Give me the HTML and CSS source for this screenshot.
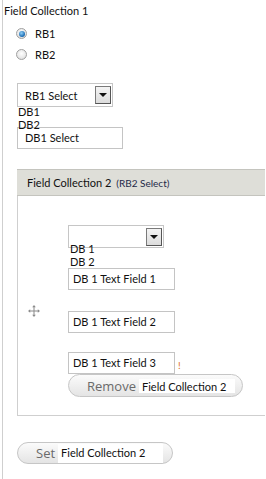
FILE: index.html
```html
<!DOCTYPE html>
<html lang="en">
	<head>
		<meta charset="UTF-8" />
		<meta name="viewport" content="width=device-width, initial-scale=1.0" />
		<title>Field Collections</title>
		<link rel="stylesheet" href="styles.css">
	</head>
	<body>
		<div class="page">
			<div class="title">Field Collection 1</div>
			<div class="radios">
				<div class="radio"><span class="dot checked"></span>RB1</div>
				<div class="radio"><span class="dot"></span>RB2</div>
			</div>
			<div class="select first">
				<span class="select-text">RB1 Select</span>
				<span class="arrow"></span>
			</div>
			<div class="options">
				<div>DB1</div>
				<div>DB2</div>
			</div>
			<div class="field db-select">DB1 Select</div>

			<div class="group">
				<div class="group-head">Field Collection 2<span class="note">(RB2 Select)</span></div>
				<div class="group-body">
					<div class="select inner">
						<span class="select-text"></span>
						<span class="arrow"></span>
					</div>
					<div class="options inner-options">
						<div>DB 1</div>
						<div>DB 2</div>
					</div>
					<div class="field">DB 1 Text Field 1</div>
					<div class="row move-row">
						<svg class="move" width="12" height="12" viewBox="0 0 12 12">
							<path d="M6 1.5v9M1.5 6h9" stroke="#8a8a8a" stroke-width="1" fill="none" />
							<path d="M6 0L4.2 2.2h3.6zM6 12L4.2 9.8h3.6zM0 6L2.2 4.2v3.6zM12 6L9.8 4.2v3.6z" fill="#8a8a8a" />
						</svg>
						<div class="field">DB 1 Text Field 2</div>
					</div>
					<div class="row third-row">
						<div class="field">DB 1 Text Field 3</div>
						<span class="warn">!</span>
					</div>
					<div class="btn remove">Remove<span class="tag">Field Collection 2</span></div>
				</div>
			</div>

			<div class="btn set">Set<span class="tag">Field Collection 2</span></div>
		</div>
	</body>
</html>
```

FILE: styles.css
```css
body {
	margin: 0;
	background-color: #fff;
	font-family: Lato, "Liberation Sans", sans-serif;
	font-size: 11px;
	color: #111;
}
.page {
	margin-left: 2px;
	min-height: 100vh;
	padding: 3px 0 0 14px;
	border-left: 1px solid #cfcfcf;
	box-sizing: border-box;
}
.title {
	margin-left: -13px;
	line-height: 16px;
}
.radios {
	margin-top: 4px;
}
.radio {
	display: flex;
	align-items: center;
	height: 21px;
}
.dot {
	width: 11px;
	height: 11px;
	margin-left: -1px;
	margin-right: 8px;
	border-radius: 50%;
	border: 1px solid #a0a0a0;
	background: radial-gradient(circle at 50% 40%, #fff 0%, #e8e8e8 60%, #cfcfcf 100%);
	box-sizing: border-box;
	position: relative;
}
.dot.checked::after {
	content: "";
	position: absolute;
	left: 1.5px;
	top: 1.5px;
	width: 6px;
	height: 6px;
	border-radius: 50%;
	background: radial-gradient(circle at 40% 35%, #8fd0f8 0%, #1f6fb5 65%, #0f4378 100%);
}
/* fake select boxes */
.select {
	display: flex;
	align-items: center;
	justify-content: space-between;
	width: 96px;
	height: 24px;
	margin-top: 18px;
	padding: 0 1px 0 7px;
	border: 1px solid #c6c6c6;
	box-sizing: border-box;
}
.arrow {
	width: 16px;
	height: 18px;
	border: 1px solid #7a7a7a;
	border-right-color: #555;
	border-bottom-color: #555;
	background: linear-gradient(#f4f4f4, #dcdcdc);
	box-sizing: border-box;
	position: relative;
}
.arrow::after {
	content: "";
	position: absolute;
	left: 3px;
	top: 6px;
	border-left: 4px solid transparent;
	border-right: 4px solid transparent;
	border-top: 4px solid #111;
}
.options {
	margin: -2px 0 0 1px;
	line-height: 13px;
}
.field {
	width: 107px;
	height: 22px;
	line-height: 20px;
	padding-left: 4px;
	border: 1px solid #c4c4c4;
	box-sizing: border-box;
	white-space: nowrap;
}
.db-select {
	width: 106px;
	margin-top: -4px;
	padding-left: 7px;
}
/* second collection */
.group {
	margin: 20px 1px 0 0;
}
.group-head {
	height: 27px;
	line-height: 25px;
	padding-left: 10px;
	background-color: #deded8;
	border-top: 1px solid #c4c4be;
	border-bottom: 1px solid #c4c4be;
	box-sizing: border-box;
}
.note {
	margin-left: 5px;
	font-size: 10px;
	color: #1e2a48;
}
.group-body {
	padding: 29px 0 18px 50px;
	border-left: 1px solid #cfcfcf;
	border-bottom: 1px solid #cfcfcf;
}
.select.inner {
	margin-top: 0;
	height: 23px;
	align-items: flex-end;
	padding-bottom: 1px;
}
.inner-options {
	margin: -6px 0 0 2px;
}
.row {
	display: flex;
	align-items: flex-start;
}
.move-row {
	margin: 21px 0 0 -40px;
}
.move {
	margin: -6px 28px 0 0;
}
.third-row {
	margin-top: 19px;
}
.warn {
	margin: 7px 0 0 3px;
	font-size: 10px;
	color: #e0731c;
}
/* pill buttons */
.btn {
	display: flex;
	align-items: center;
	height: 23px;
	padding-left: 18px;
	border: 1px solid #c6c6c6;
	border-radius: 12px;
	background: linear-gradient(#fbfbfb, #e4e4e4);
	box-sizing: border-box;
	font-family: "Open Sans", "Liberation Sans", sans-serif;
	font-size: 13px;
	color: #6a6a6a;
}
.tag {
	margin-left: 3px;
	padding-left: 3px;
	background-color: #fff;
	font-family: Lato, "Liberation Sans", sans-serif;
	font-size: 11px;
	color: #111;
	white-space: nowrap;
}
.remove {
	width: 175px;
}
.remove .tag {
	width: 96px;
	height: 14px;
	line-height: 15px;
	box-sizing: border-box;
}
.set {
	width: 156px;
	height: 22px;
	margin-top: 26px;
}
.set .tag {
	width: 105px;
	height: 19px;
	line-height: 17px;
	box-sizing: border-box;
}
```
